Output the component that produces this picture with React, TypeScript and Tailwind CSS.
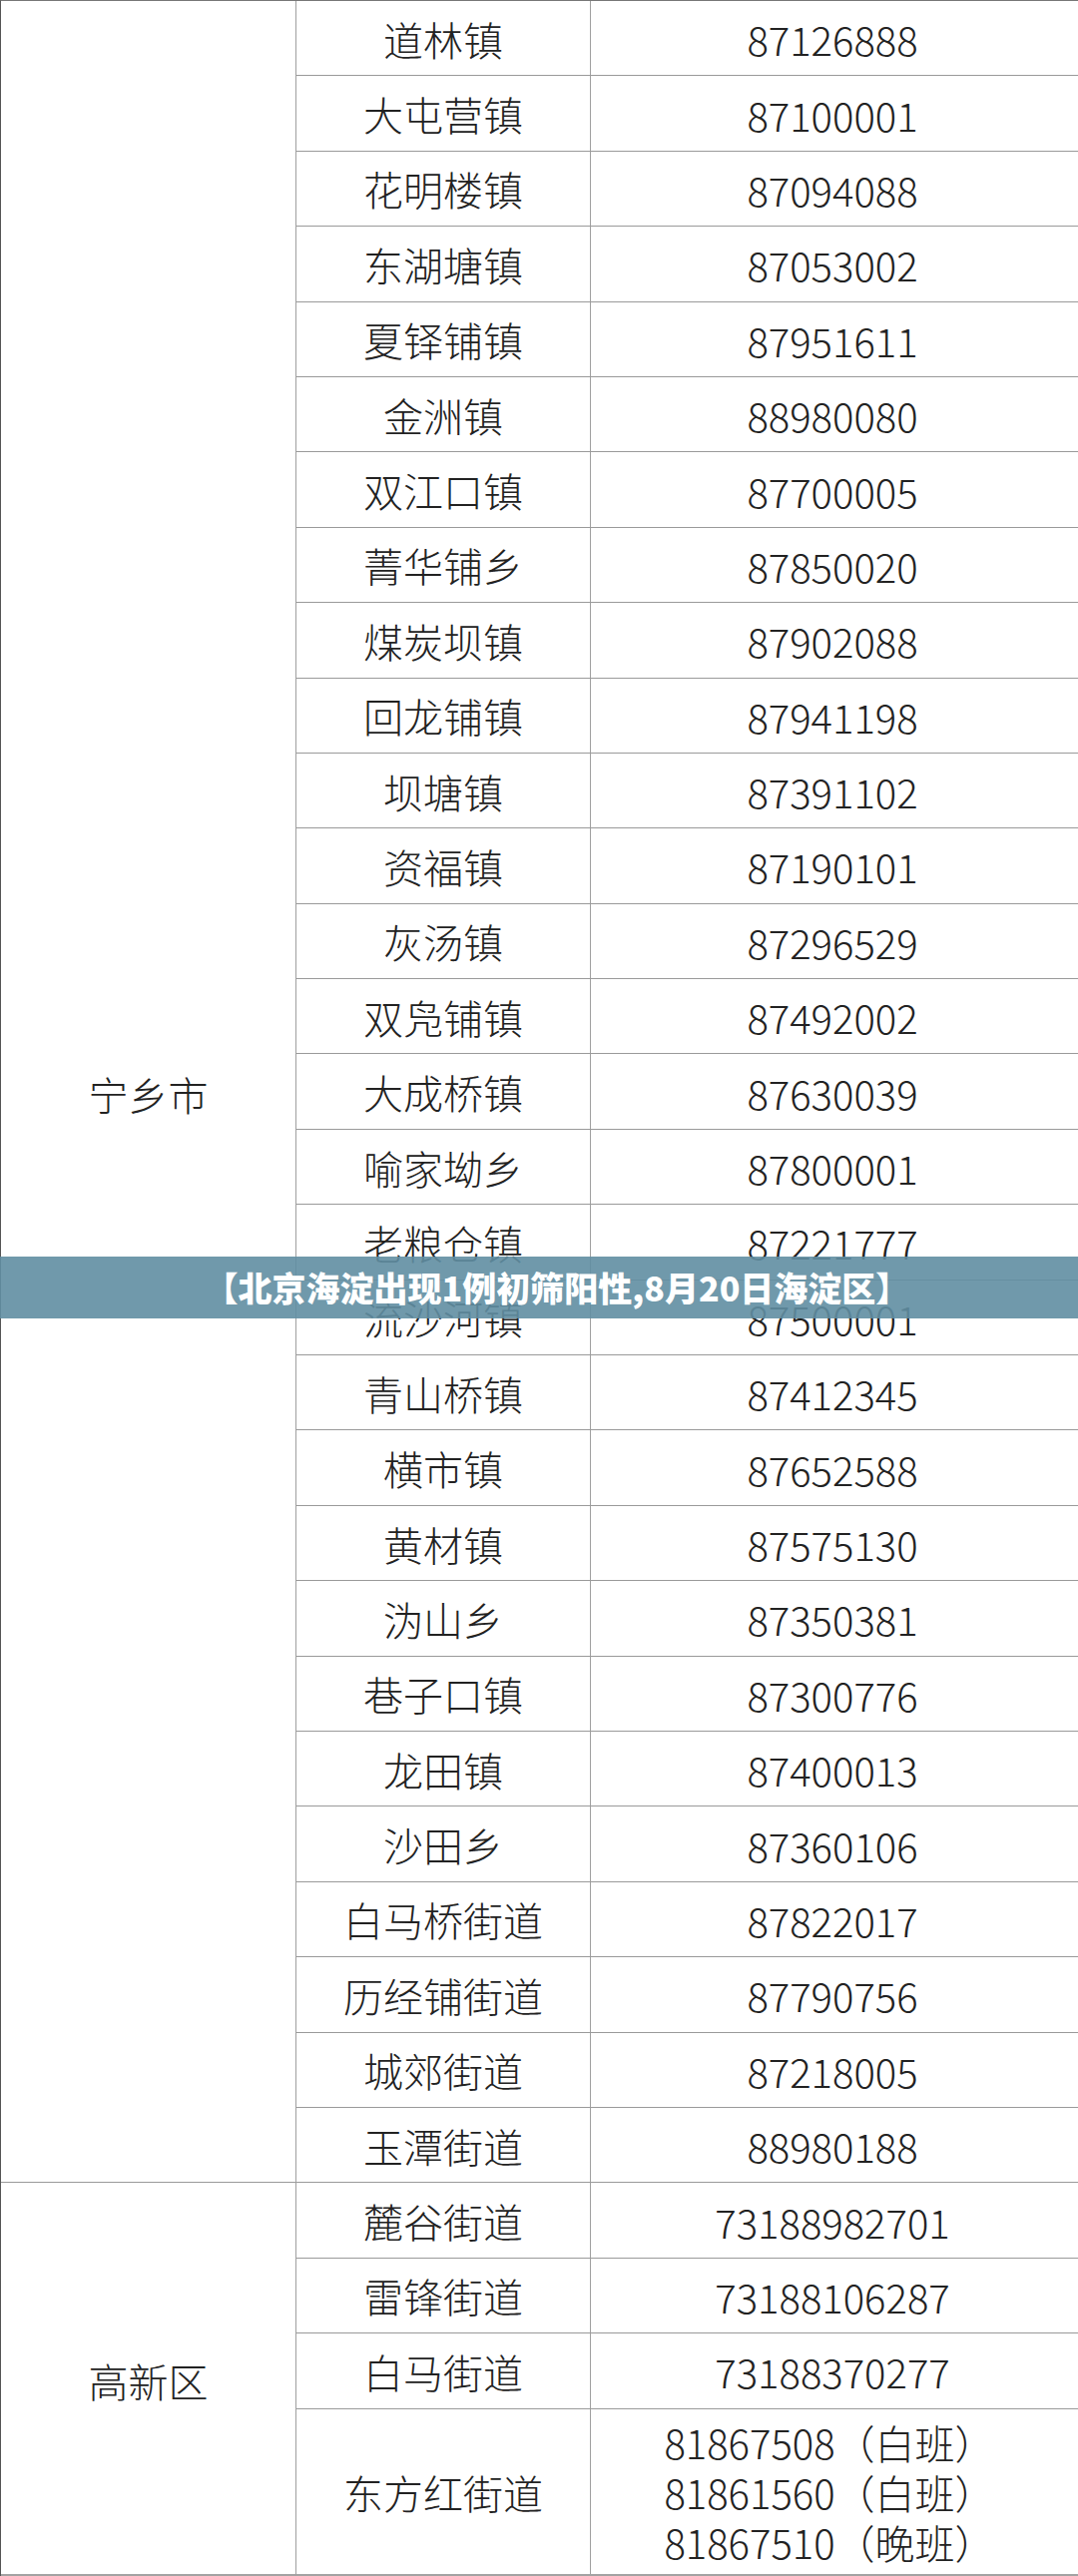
import * as React from "react";

type Row = {
  name: string;
  phones: string[];
};

type Section = {
  area: string;
  rows: Row[];
};

const sections: Section[] = [
  {
    area: "宁乡市",
    rows: [
      { name: "道林镇", phones: ["87126888"] },
      { name: "大屯营镇", phones: ["87100001"] },
      { name: "花明楼镇", phones: ["87094088"] },
      { name: "东湖塘镇", phones: ["87053002"] },
      { name: "夏铎铺镇", phones: ["87951611"] },
      { name: "金洲镇", phones: ["88980080"] },
      { name: "双江口镇", phones: ["87700005"] },
      { name: "菁华铺乡", phones: ["87850020"] },
      { name: "煤炭坝镇", phones: ["87902088"] },
      { name: "回龙铺镇", phones: ["87941198"] },
      { name: "坝塘镇", phones: ["87391102"] },
      { name: "资福镇", phones: ["87190101"] },
      { name: "灰汤镇", phones: ["87296529"] },
      { name: "双凫铺镇", phones: ["87492002"] },
      { name: "大成桥镇", phones: ["87630039"] },
      { name: "喻家坳乡", phones: ["87800001"] },
      { name: "老粮仓镇", phones: ["87221777"] },
      { name: "流沙河镇", phones: ["87500001"] },
      { name: "青山桥镇", phones: ["87412345"] },
      { name: "横市镇", phones: ["87652588"] },
      { name: "黄材镇", phones: ["87575130"] },
      { name: "沩山乡", phones: ["87350381"] },
      { name: "巷子口镇", phones: ["87300776"] },
      { name: "龙田镇", phones: ["87400013"] },
      { name: "沙田乡", phones: ["87360106"] },
      { name: "白马桥街道", phones: ["87822017"] },
      { name: "历经铺街道", phones: ["87790756"] },
      { name: "城郊街道", phones: ["87218005"] },
      { name: "玉潭街道", phones: ["88980188"] },
    ],
  },
  {
    area: "高新区",
    rows: [
      { name: "麓谷街道", phones: ["73188982701"] },
      { name: "雷锋街道", phones: ["73188106287"] },
      { name: "白马街道", phones: ["73188370277"] },
      {
        name: "东方红街道",
        phones: ["81867508（白班）", "81861560（白班）", "81867510（晚班）"],
      },
    ],
  },
];

function TableRow({ row }: { row: Row }) {
  const tall = row.phones.length > 1;
  return (
    <div
      className={
        tall
          ? "flex h-[167px] border-b-2 border-[#a3a3a3]"
          : "flex h-[75.4px] border-b border-[#9a9a9a]"
      }
    >
      <div className="flex w-[295px] shrink-0 items-center justify-center border-r border-[#a0a0a0] pt-[1px]">
        {row.name}
      </div>
      <div className="flex flex-1 flex-col items-center justify-center pt-[2px] leading-[50px]">
        {row.phones.map((p) => (
          <div key={p} className={tall ? "pr-[10px]" : "pr-[4px]"}>
            {p}
          </div>
        ))}
      </div>
    </div>
  );
}

export default function App() {
  return (
    <div className="relative w-[1080px] bg-white">
      <div className="border-t border-l border-t-[#777] border-l-[#555] font-['Noto_Sans_CJK_SC',sans-serif] text-[40px] font-light text-[#222]">
        {sections.map((s, i) => (
          <div key={s.area} className="flex">
            <div
              className={
                i === sections.length - 1
                  ? "flex w-[296px] shrink-0 items-center justify-center border-r border-b-2 border-r-[#a0a0a0] border-b-[#a3a3a3] pt-[4px]"
                  : "flex w-[296px] shrink-0 items-center justify-center border-r border-b border-r-[#a0a0a0] border-b-[#9a9a9a] pt-[4px]"
              }
            >
              {s.area}
            </div>
            <div className="flex flex-1 flex-col">
              {s.rows.map((r) => (
                <TableRow key={r.name} row={r} />
              ))}
            </div>
          </div>
        ))}
      </div>

      {/* caption banner laid over the table */}
      <div className="absolute top-[1259px] left-0 flex h-[62px] w-full items-center justify-center bg-[#618ea2]/90 pl-[36px]">
        <span className="font-['Noto_Sans_CJK_SC',sans-serif] text-[34px] leading-none font-black text-white">
          【北京海淀出现1例初筛阳性,8月20日海淀区】
        </span>
      </div>
    </div>
  );
}
